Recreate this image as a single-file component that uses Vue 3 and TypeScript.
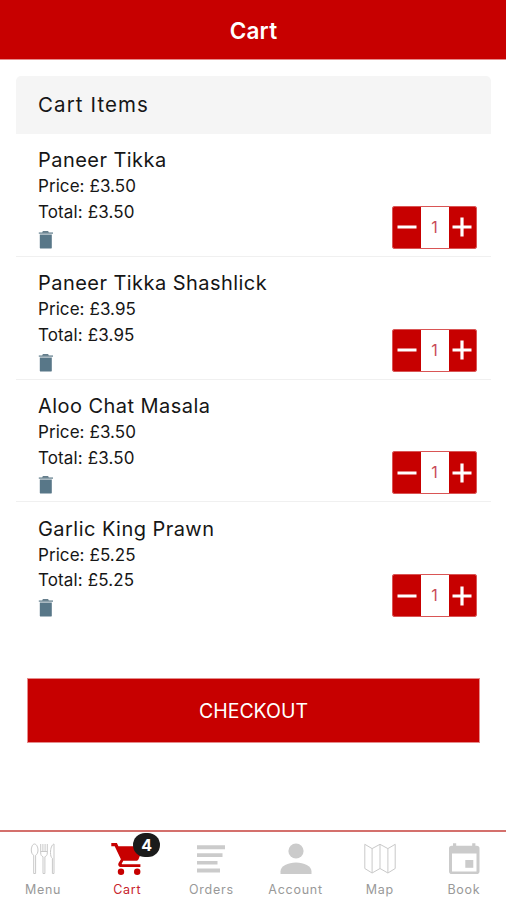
<script setup lang="ts">
import { ref } from 'vue'

interface CartItem {
  name: string
  price: number
  quantity: number
}

const items = ref<CartItem[]>([
  { name: 'Paneer Tikka', price: 3.5, quantity: 1 },
  { name: 'Paneer Tikka Shashlick', price: 3.95, quantity: 1 },
  { name: 'Aloo Chat Masala', price: 3.5, quantity: 1 },
  { name: 'Garlic King Prawn', price: 5.25, quantity: 1 },
])

const tabs = ['Menu', 'Cart', 'Orders', 'Account', 'Map', 'Book']
const active = ref('Cart')

const money = (value: number): string => `£${value.toFixed(2)}`

function change(item: CartItem, by: number): void {
  item.quantity = Math.max(1, item.quantity + by)
}

function remove(index: number): void {
  items.value.splice(index, 1)
}
</script>

<template>
  <div class="screen">
    <header class="header"><h1>Cart</h1></header>

    <main class="content">
      <section class="items">
        <h2 class="heading">Cart Items</h2>
        <article v-for="(item, index) in items" :key="item.name" class="row">
          <div class="info">
            <h3 class="name">{{ item.name }}</h3>
            <p class="line">Price: {{ money(item.price) }}</p>
            <p class="line total">Total: {{ money(item.price * item.quantity) }}</p>
            <button class="trash" @click="remove(index)">
              <svg width="16" height="20" viewBox="0 0 16 20">
                <path d="M5 1.2h5l.8 1H15v1.900H.8V2.200h3.400z" fill="#8fa3ad" />
                <path d="M5 1.2h5l.8 1.2H4.200z" fill="#4f6b7a" />
                <path d="M1.800 4.500h12v12.900q0 1.200-1.200 1.200H3q-1.200 0-1.200-1.200z" fill="#587788" />
              </svg>
            </button>
          </div>
          <div class="stepper">
            <button class="step" @click="change(item, -1)">
              <svg width="20" height="20" viewBox="0 0 20 20"><path d="M.5 10h19" /></svg>
            </button>
            <span class="count">{{ item.quantity }}</span>
            <button class="step" @click="change(item, 1)">
              <svg width="20" height="20" viewBox="0 0 20 20"><path d="M.5 10h19M10 .5v19" /></svg>
            </button>
          </div>
        </article>
      </section>
      <button class="checkout">CHECKOUT</button>
    </main>

    <nav class="tabs">
      <button
        v-for="tab in tabs"
        :key="tab"
        class="tab"
        :class="{ active: tab === active }"
        @click="active = tab"
      >
        <span class="icon">
          <svg v-if="tab === 'Menu'" class="outline" width="36" height="36" viewBox="0 0 36 36">
            <path d="M9.500 3C7.500 3 6.300 6.300 6.300 9c0 3 1.200 4.700 2.400 5.300V32.500h1.900V14.300c1.200-.6 2.400-2.300 2.400-5.300 0-2.700-1.500-6-3.500-6z" />
            <path d="M15.700 3v9c0 2.200 1 3.200 2.300 3.700v16.800h1.900V15.700c1.400-.5 2.400-1.500 2.400-3.700V3M17.900 3v7.500M20.100 3v7.500M15.700 10.500h6.600" />
            <path d="M29 3c-2.200.6-3.500 4.300-3.500 8.500 0 3 .6 5 1.900 5.800v15.200H29z" />
          </svg>
          <svg v-else-if="tab === 'Cart'" width="36" height="36" viewBox="0 0 36 36">
            <path d="M2.300 2v3.200h3.400l6.200 13-2.300 3.800c-1 1.900.2 4 2.400 4h19.400v-2.800H13.300c-.5 0-.7-.4-.5-.8l1.500-2.600h12.800c1 0 1.800-.5 2.300-1.400L34 7.200c.5-.9-.1-2-1.200-2H9.400L7.900 2z" />
            <circle cx="12" cy="30.800" r="3.200" /><circle cx="28.200" cy="30.800" r="3.200" />
          </svg>
          <svg v-else-if="tab === 'Orders'" width="36" height="36" viewBox="0 0 36 36">
            <path d="M4 4.200h28v4.100H4zm0 8h25.500v3.700H4zm0 7.700h20.500v3.700H4zm0 7.500h23v4.100H4z" />
          </svg>
          <svg v-else-if="tab === 'Account'" width="36" height="36" viewBox="0 0 36 36">
            <circle cx="18" cy="10" r="7.600" />
            <path d="M2.500 33v-2.600c0-5.300 7.400-8.900 15.500-8.900s15.500 3.600 15.500 8.900V33z" />
          </svg>
          <svg v-else-if="tab === 'Map'" class="outline" width="36" height="36" viewBox="0 0 36 36">
            <path d="M2.800 3.300l7.300 4.300 7.900-4.300 7.900 4.300 7.300-4.300v24.200l-7.300 4.500-7.900-4.500-7.900 4.500-7.300-4.500zM10.100 7.600V32M18 3.300v24.200M25.900 7.600V32" />
          </svg>
          <svg v-else width="36" height="36" viewBox="0 0 36 36">
            <path fill-rule="evenodd" d="M7 2.200h3.200v2.600h16V2.200h3.200v2.600h1.300q2.800 0 2.800 2.800v22.700q0 2.800-2.800 2.800H5.800Q3 33.100 3 30.300V7.600q0-2.800 2.800-2.800H7zM6 12.600v17.800h24.500V12.600z" />
            <path d="M19.300 19h8v7.800h-8z" />
          </svg>
          <span v-if="tab === 'Cart'" class="badge">{{ items.length }}</span>
        </span>
        <span class="label">{{ tab }}</span>
      </button>
    </nav>
  </div>
</template>

<style>
body {
  margin: 0;
  background: #fff;
}
</style>

<style scoped>
.screen {
  display: flex;
  flex-direction: column;
  height: 900px;
  color: #161616;
  font-family: Inter, "Liberation Sans", sans-serif;
}
h1, h2, h3, p {
  margin: 0;
  font-weight: 400;
}
button {
  margin: 0;
  padding: 0;
  border: 0;
  background: none;
  color: inherit;
  font: inherit;
}
svg {
  display: block;
}
.header {
  display: flex;
  align-items: center;
  justify-content: center;
  box-sizing: border-box;
  height: 60px;
  padding-top: 2px;
  border-bottom: 1px solid #e58c8c;
  background: #c70000;
}
.header h1 {
  padding-left: 1px;
  color: #fff;
  font-size: 22.5px;
  font-weight: 600;
  letter-spacing: 0.2px;
}
.content {
  display: flex;
  flex: 1;
  flex-direction: column;
  padding: 16px 15px 0 16px;
}
.heading {
  height: 58px;
  padding-left: 22px;
  border-radius: 5px 5px 0 0;
  background: #f5f5f5;
  font-size: 20.5px;
  line-height: 58px;
  letter-spacing: 1.1px;
}
.row {
  display: flex;
  align-items: flex-end;
  justify-content: space-between;
  box-sizing: border-box;
  height: 122.75px;
  padding: 0 14px 7px 22px;
  border-bottom: 1px solid #f0f0f0;
}
.row:last-child {
  border-bottom-color: transparent;
}
.name {
  font-size: 20px;
  line-height: 27px;
  letter-spacing: 0.45px;
  white-space: nowrap;
}
.line {
  font-size: 17px;
  line-height: 25.7px;
  letter-spacing: 0.07px;
}
.total {
  letter-spacing: 0.13px;
}
.trash {
  display: block;
  margin: 4px 0 -1px;
}
.stepper {
  display: flex;
  box-sizing: border-box;
  width: 85px;
  height: 43px;
  overflow: hidden;
  border: 1px solid #d95555;
  border-radius: 2px;
}
.step {
  display: grid;
  flex: 1;
  place-items: center;
  background: #c70000;
}
.step svg {
  fill: none;
  stroke: #fff;
  stroke-width: 3.2;
}
.count {
  width: 28px;
  color: #c94b58;
  font-size: 16px;
  line-height: 41px;
  text-align: center;
}
.checkout {
  height: 65px;
  margin: 53px 11px 0;
  border: 1px solid #e58c8c;
  background: #c70000;
  color: #fff;
  font-size: 19.5px;
}
.tabs {
  display: flex;
  box-sizing: border-box;
  height: 70px;
  padding-left: 1px;
  border-top: 2px solid #d4706c;
}
.tab {
  display: flex;
  flex: 1;
  flex-direction: column;
  align-items: center;
  padding-top: 9px;
  color: #999;
  font-size: 12.5px;
  line-height: 16px;
  letter-spacing: 0.75px;
}
.tab.active {
  color: #c7232b;
}
.icon {
  position: relative;
  fill: #cbcbcb;
}
.active .icon {
  fill: #c70000;
}
.outline {
  fill: none;
  stroke: #c9c9c9;
  stroke-width: 1;
}
.label {
  margin-top: 5px;
}
.badge {
  position: absolute;
  top: -8px;
  left: 24px;
  width: 27px;
  height: 24px;
  border-radius: 12px;
  background: #1b1b1b;
  color: #fff;
  font-size: 16px;
  font-weight: 700;
  line-height: 24px;
  letter-spacing: 0;
  text-align: center;
}
</style>
